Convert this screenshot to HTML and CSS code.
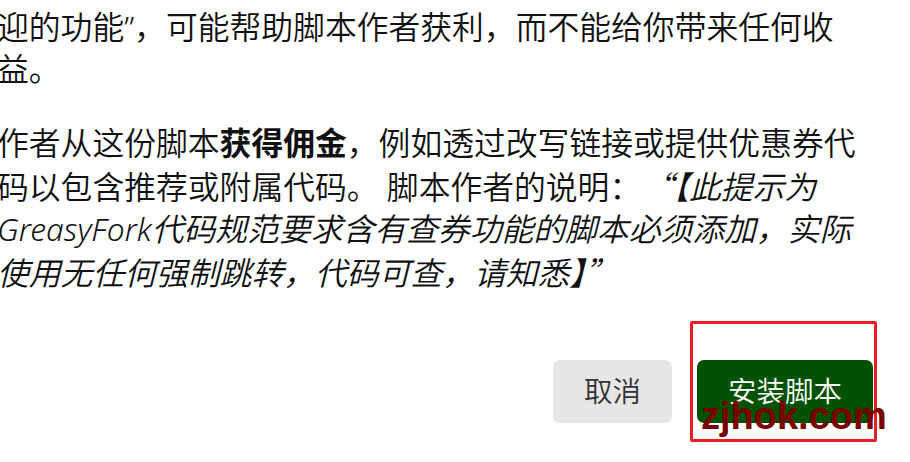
FILE: index.html
```html
<!DOCTYPE html>
<html lang="zh-CN">
<head>
<meta charset="utf-8">
<title>安装脚本</title>
<link rel="stylesheet" href="styles.css">
</head>
<body>
<div class="dialog">
  <div class="notice">
    <p class="para">迎的功能”，可能帮助脚本作者获利，而不能给你带来任何收益。</p>
    <p class="para">作者从这份脚本<strong>获得佣金</strong>，例如透过改写链接或提供优惠券代码以包含推荐或附属代码。 脚本作者的说明：<span class="cjk-quote">“</span><em>【此提示为GreasyFork代码规范要求含有查券功能的脚本必须添加，实际使用无任何强制跳转，代码可查，请知悉】</em><span class="cjk-quote">”</span></p>
  </div>
  <div class="actions">
    <button class="btn btn-cancel" type="button">取消</button>
    <button class="btn btn-install" type="button">安装脚本</button>
  </div>
  <div class="highlight"></div>
  <div class="watermark">zjhok.com</div>
</div>
</body>
</html>
```

FILE: styles.css
```css
html, body {
  margin: 0;
  padding: 0;
  background: #ffffff;
}

body {
  font-family: "Noto Sans", "Noto Sans CJK SC", sans-serif;
  color: #111111;
  overflow: hidden;
}

.dialog {
  position: relative;
  width: 910px;
  height: 462px;
  overflow: hidden;
}

.notice {
  width: 866px;
  margin-left: -3px;
  padding-top: 6px;
  font-size: 31.8px;
  font-weight: 350;
  line-height: 42px;
}

.para {
  margin: 0 0 32px 0;
}

.para:last-child {
  margin-bottom: 0;
}

.para strong {
  font-weight: 700;
}

.para em {
  font-style: italic;
}

.cjk-quote {
  font-family: "Noto Sans CJK SC", sans-serif;
  font-style: italic;
}

.actions {
  display: flex;
  justify-content: flex-end;
  gap: 25px;
  margin-top: 66px;
  padding-right: 37px;
}

.btn {
  font-family: "Noto Sans", "Noto Sans CJK SC", sans-serif;
  font-size: 28.5px;
  font-weight: 350;
  line-height: 39px;
  padding: 12px 31px;
  border: none;
  border-radius: 7px;
  cursor: pointer;
}

.btn-cancel {
  background: #e6e6e6;
  color: #333333;
}

.btn-install {
  background: #005200;
  color: #ffffff;
}

.highlight {
  position: absolute;
  left: 690px;
  top: 321px;
  width: 181px;
  height: 115px;
  border: 3px solid #ea1c27;
  border-radius: 2px;
}

.watermark {
  position: absolute;
  left: 701px;
  top: 395px;
  font-family: "Liberation Sans", Arial, sans-serif;
  font-weight: 700;
  font-size: 38px;
  line-height: 42px;
  color: #7a0000;
}
```
